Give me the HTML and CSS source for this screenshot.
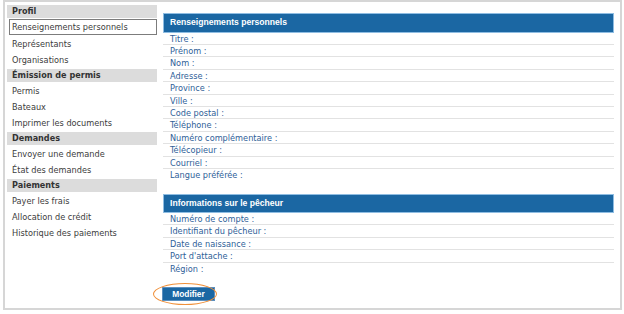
FILE: index.html
```html
<!DOCTYPE html>
<html>
	<head>
		<meta charset="utf-8">
		<title>Profil</title>
		<link rel="stylesheet" href="styles.css">
	</head>
	<body>
	<div class="frame">
		<!--menu-->
		<div class="side">
			<h3>Profil</h3>
			<ul>
				<li class="on">Renseignements personnels</li>
				<li>Représentants</li>
				<li>Organisations</li>
			</ul>
			<h3>Émission de permis</h3>
			<ul>
				<li>Permis</li>
				<li>Bateaux</li>
				<li>Imprimer les documents</li>
			</ul>
			<h3>Demandes</h3>
			<ul>
				<li>Envoyer une demande</li>
				<li>État des demandes</li>
			</ul>
			<h3>Paiements</h3>
			<ul>
				<li>Payer les frais</li>
				<li>Allocation de crédit</li>
				<li>Historique des paiements</li>
			</ul>
		</div>
		<!--contenu-->
		<div class="main">
			<div class="box">
				<h2>Renseignements personnels</h2>
				<ul class="rows">
					<li>Titre :</li>
					<li>Prénom :</li>
					<li>Nom :</li>
					<li>Adresse :</li>
					<li>Province :</li>
					<li>Ville :</li>
					<li>Code postal :</li>
					<li>Téléphone :</li>
					<li>Numéro complémentaire :</li>
					<li>Télécopieur :</li>
					<li>Courriel :</li>
					<li>Langue préférée :</li>
				</ul>
			</div>
			<div class="box">
				<h2>Informations sur le pêcheur</h2>
				<ul class="rows">
					<li>Numéro de compte :</li>
					<li>Identifiant du pêcheur :</li>
					<li>Date de naissance :</li>
					<li>Port d'attache :</li>
					<li>Région :</li>
				</ul>
			</div>
			<div class="btn_wrap">
				<a href="javascript:;" class="btn">Modifier</a>
				<span class="ring"></span>
			</div>
		</div>
	</div>
	</body>
</html>
```

FILE: styles.css
```css
*{margin:0px;padding:0px;list-style:none;}
body{background:#fff;font-family:"DejaVu Sans",Verdana,sans-serif;}
.frame{margin-left:3px;width:613px;border:2px solid #d6d6d6;display:flex;padding:3px 0 0 2px;box-sizing:content-box;height:303px;}
/*menu*/
.side{width:150px;flex:none;}
.side h3{height:13px;line-height:13px;background:#dcdcdc;font-size:8.1px;font-weight:bold;color:#333;padding-left:5px;margin-bottom:1px;}
.side ul{margin-bottom:1px;}
.side li{height:16px;line-height:16px;font-size:8.2px;color:#3c3c3c;padding-left:5px;}
.side li.on{border:1px solid #7c7c7c;height:14px;line-height:14px;margin:1px 0 1px 2px;padding-left:2px;}
/*contenu*/
.main{width:451px;margin-left:6px;padding-top:8.3px;}
.box{margin-bottom:12.2px;}
.box h2{height:17.4px;line-height:17.4px;background:#1b67a3;border:1px solid #8fbde2;color:#fff;font-family:"Liberation Sans",Arial,sans-serif;font-size:8.6px;font-weight:bold;padding-left:6px;}
.rows li{height:11.4px;line-height:12px;border-bottom:1px solid #e2e2e2;font-size:8.2px;color:#2f6198;padding-left:7px;}
.rows li:last-child{border-bottom:none;height:12.4px;}
.btn_wrap{position:relative;display:flex;margin-top:2.5px;}
.btn{display:block;width:53px;height:14px;line-height:13px;text-align:center;background:#1b67a3;border:1px solid #5b8fbf;color:#fff;font-family:"Liberation Sans",Arial,sans-serif;font-size:8.4px;font-weight:bold;text-decoration:none;margin-left:-1px;box-sizing:border-box;}
.ring{position:absolute;left:-10px;top:-4.5px;width:62px;height:20px;border:1.5px solid #f0903a;border-radius:50%;}
```
